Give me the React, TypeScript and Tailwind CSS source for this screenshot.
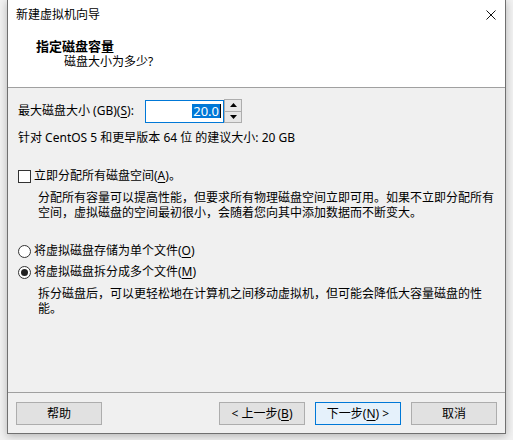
import React from "react";

const font = { fontFamily: '"Noto Sans", "Noto Sans CJK SC", sans-serif' };

function Btn({ children, primary }: { children: React.ReactNode; primary?: boolean }) {
  return (
    <button
      className={
        primary
          ? "w-[86px] h-[23px] border border-[#0078d7] bg-[#e5f1fb] text-[12px] leading-none text-black flex items-center justify-center"
          : "w-[86px] h-[23px] border border-[#adadad] bg-[#e1e1e1] text-[12px] leading-none text-black flex items-center justify-center"
      }
    >
      {children}
    </button>
  );
}

function U({ children }: { children: React.ReactNode }) {
  return <span className="underline underline-offset-2">{children}</span>;
}

export default function App() {
  return (
    <div style={font} className="w-[513px] h-[440px] bg-[#f1f1f1] pl-[7px] text-[12px] text-black">
      <div className="w-[499px] h-[434px] border-x border-b border-[#707070] bg-[#f0f0f0] flex flex-col shadow-[0_2px_8px_rgba(0,0,0,0.25)]">
        {/* title + header */}
        <div className="h-[88px] bg-white border-b border-[#a0a0a0] flex flex-col">
          <div className="h-[30px] flex items-center justify-between pl-[8px] pr-[9px]">
            <span className="leading-[16px]">新建虚拟机向导</span>
            <svg width="10" height="10" viewBox="0 0 10 10">
              <path d="M0.5 0.5 L9.5 9.5 M9.5 0.5 L0.5 9.5" stroke="#111" strokeWidth="1" />
            </svg>
          </div>
          <div className="mt-[8px] pl-[28px] font-bold text-[13px] leading-[16px]">指定磁盘容量</div>
          <div className="pl-[56px] leading-[16px]">磁盘大小为多少?</div>
        </div>

        {/* body */}
        <div className="flex-1 flex flex-col pl-[10px]">
          <div className="mt-[11px] flex items-center h-[24px]">
            <span className="w-[127px] leading-[16px]">
              最大磁盘大小 (GB)(<U>S</U>):
            </span>
            <div className="w-[79px] h-[23px] border border-[#0078d7] bg-white flex items-center justify-end pr-[2px]">
              <span className="bg-[#0078d7] text-white text-[13px] leading-[14px] px-[1px]">20.0</span>
              <span className="w-[1px] h-[14px] bg-black" />
            </div>
            <div className="w-[18px] h-[24px] border border-[#adadad] bg-[#e6e6e6] flex flex-col">
              <div className="flex-1 flex items-center justify-center border-b border-[#adadad]">
                <svg width="7" height="4" viewBox="0 0 7 4">
                  <path d="M0 4 L3.5 0 L7 4 Z" fill="#000" />
                </svg>
              </div>
              <div className="flex-1 flex items-center justify-center">
                <svg width="7" height="4" viewBox="0 0 7 4">
                  <path d="M0 0 L3.5 4 L7 0 Z" fill="#000" />
                </svg>
              </div>
            </div>
          </div>
          <div className="mt-[7px] leading-[16px]">针对 CentOS 5 和更早版本 64 位 的建议大小: 20 GB</div>

          <div className="mt-[22px] flex items-center h-[16px]">
            <span className="w-[13px] h-[13px] border border-[#333] bg-white" />
            <span className="ml-[3px] leading-[16px]">
              立即分配所有磁盘空间(<U>A</U>)。
            </span>
          </div>
          <div className="mt-[6px] ml-[20px] leading-[15px]">
            分配所有容量可以提高性能，但要求所有物理磁盘空间立即可用。如果不立即分配所有
            <br />
            空间，虚拟磁盘的空间最初很小，会随着您向其中添加数据而不断变大。
          </div>

          <div className="mt-[23px] flex items-center h-[16px]">
            <span className="w-[13px] h-[13px] rounded-full border border-[#333] bg-white" />
            <span className="ml-[3px] leading-[16px]">
              将虚拟磁盘存储为单个文件(<U>O</U>)
            </span>
          </div>
          <div className="mt-[5px] flex items-center h-[16px]">
            <span className="w-[13px] h-[13px] rounded-full border border-[#333] bg-white flex items-center justify-center">
              <span className="w-[7px] h-[7px] rounded-full bg-[#222]" />
            </span>
            <span className="ml-[3px] leading-[16px]">
              将虚拟磁盘拆分成多个文件(<U>M</U>)
            </span>
          </div>
          <div className="mt-[6px] ml-[20px] leading-[15px]">
            拆分磁盘后，可以更轻松地在计算机之间移动虚拟机，但可能会降低大容量磁盘的性
            <br />
            能。
          </div>
        </div>

        {/* footer */}
        <div className="border-t border-[#a0a0a0] pt-[9px] pb-[8px] pl-[8px] pr-[8px] flex items-center">
          <Btn>帮助</Btn>
          <div className="flex-1" />
          <div className="flex gap-[10px]">
            <Btn>
              &lt; 上一步(<U>B</U>)
            </Btn>
            <Btn primary>
              下一步(<U>N</U>) &gt;
            </Btn>
            <Btn>取消</Btn>
          </div>
        </div>
      </div>
    </div>
  );
}
